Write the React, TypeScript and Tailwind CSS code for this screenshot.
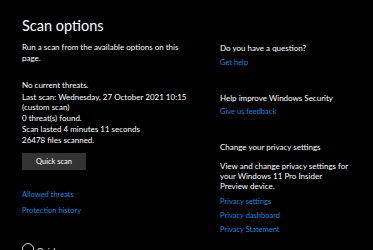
export default function App() {
  return (
    <div className="w-[373px] h-[250px] overflow-hidden bg-black text-white flex font-['Segoe_UI',Lato,sans-serif]">
      {/* Left column */}
      <div className="w-[220px] shrink-0 pl-[22px] pt-[14.5px] flex flex-col items-start">
        <h1 className="text-[14.5px] leading-[22px]">Scan options</h1>

        <p className="mt-[5.5px] w-[172px] text-[8px] leading-[11px]">
          Run a scan from the available options on this page.
        </p>

        <p className="mt-[16px] text-[8px] leading-[11px]">No current threats.</p>

        <div className="mt-[0.5px] w-[172px] text-[8px] leading-[10.8px]">
          <p>Last scan: Wednesday, 27 October 2021 10:15 (custom scan)</p>
          <p>0 threat(s) found.</p>
          <p>Scan lasted 4 minutes 11 seconds</p>
          <p>26478 files scanned.</p>
        </div>

        <button className="mt-[8px] w-[64px] h-[17px] bg-[#333333] text-[7.5px] leading-[17px] text-white">
          Quick scan
        </button>

        <a className="mt-[18.5px] text-[7.5px] leading-[11px] text-[#1a86d9]">Allowed threats</a>
        <a className="mt-[5.5px] text-[7.5px] leading-[11px] text-[#1a86d9]">Protection history</a>

        <label className="mt-[27px] flex items-start gap-[3px]">
          <span className="w-[12px] h-[12px] rounded-full border border-[#d0d0d0] shrink-0" />
          <span className="text-[8px] leading-[11px] mt-[3px]">Quick scan</span>
        </label>
      </div>

      {/* Right column */}
      <div className="flex-1 pt-[43px] flex flex-col items-start text-[8px]">
        <p className="leading-[11px]">Do you have a question?</p>
        <a className="mt-[2.5px] text-[7.5px] leading-[11px] text-[#1a86d9]">Get help</a>

        <p className="mt-[25px] leading-[11px]">Help improve Windows Security</p>
        <a className="mt-[2.5px] text-[7.5px] leading-[11px] text-[#1a86d9]">Give us feedback</a>

        <p className="mt-[25px] leading-[11px]">Change your privacy settings</p>
        <p className="mt-[7.5px] w-[130px] leading-[10px]">
          View and change privacy settings for your Windows 11 Pro Insider Preview device.
        </p>
        <a className="mt-[5px] text-[7.5px] leading-[11px] text-[#1a86d9]">Privacy settings</a>
        <a className="mt-[3px] text-[7.5px] leading-[11px] text-[#1a86d9]">Privacy dashboard</a>
        <a className="mt-[3px] text-[7.5px] leading-[11px] text-[#1a86d9]">Privacy Statement</a>
      </div>
    </div>
  );
}
